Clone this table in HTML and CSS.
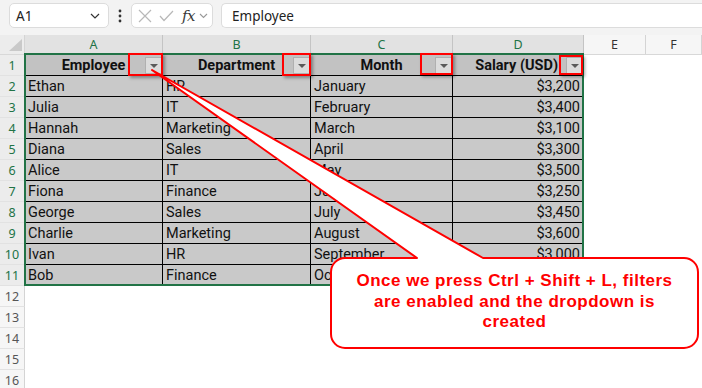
FILE: index.html
```html
<!DOCTYPE html>
<html>
<head>
<meta charset="utf-8">
<link rel="stylesheet" href="styles.css">
</head>
<body>
<div class="app">
  <div class="topbar">
    <div class="namebox">
      <span>A1</span>
      <svg class="chev" width="10" height="6" viewBox="0 0 10 6"><polyline points="1,1 5,5 9,1" fill="none" stroke="#333" stroke-width="1.2"/></svg>
    </div>
    <div class="kebab">
      <svg width="4" height="14" viewBox="0 0 4 14"><circle cx="2" cy="2" r="1.4" fill="#333"/><circle cx="2" cy="7" r="1.4" fill="#333"/><circle cx="2" cy="12" r="1.4" fill="#333"/></svg>
    </div>
    <div class="fxbox">
      <svg width="14" height="14" viewBox="0 0 14 14"><path d="M1 1 L13 13 M13 1 L1 13" stroke="#b8b8b8" stroke-width="1.2" fill="none"/></svg>
      <svg width="15" height="12" viewBox="0 0 15 12"><polyline points="1,6 5,10.5 14,1" fill="none" stroke="#b8b8b8" stroke-width="1.2"/></svg>
      <span class="fx">fx</span>
      <svg width="9" height="6" viewBox="0 0 9 6"><polyline points="1,1 4.5,4.5 8,1" fill="none" stroke="#999" stroke-width="1.1"/></svg>
    </div>
    <div class="formula">Employee</div>
  </div>

  <div class="sheet">
    <div class="row colhead">
      <div class="corner"><svg width="13" height="12" viewBox="0 0 13 12"><polygon points="13,0 13,12 0,12" fill="#c9c9c9"/></svg></div>
      <div class="ch sel">A</div>
      <div class="ch sel">B</div>
      <div class="ch sel">C</div>
      <div class="ch sel">D</div>
      <div class="ch">E</div>
      <div class="ch">F</div>
    </div>

    <div class="row">
      <div class="rh sel">1</div>
      <div class="c hd"><span>Employee</span><span class="fbtn"></span></div>
      <div class="c hd"><span>Department</span><span class="fbtn"></span></div>
      <div class="c hd"><span>Month</span><span class="fbtn"></span></div>
      <div class="c hd right"><span>Salary (USD)</span><span class="fbtn"></span></div>
      <div class="e"></div><div class="e"></div>
    </div>
    <div class="row">
      <div class="rh sel">2</div>
      <div class="c">Ethan</div><div class="c">HR</div><div class="c">January</div><div class="c num">$3,200</div>
      <div class="e"></div><div class="e"></div>
    </div>
    <div class="row">
      <div class="rh sel">3</div>
      <div class="c">Julia</div><div class="c">IT</div><div class="c">February</div><div class="c num">$3,400</div>
      <div class="e"></div><div class="e"></div>
    </div>
    <div class="row">
      <div class="rh sel">4</div>
      <div class="c">Hannah</div><div class="c">Marketing</div><div class="c">March</div><div class="c num">$3,100</div>
      <div class="e"></div><div class="e"></div>
    </div>
    <div class="row">
      <div class="rh sel">5</div>
      <div class="c">Diana</div><div class="c">Sales</div><div class="c">April</div><div class="c num">$3,300</div>
      <div class="e"></div><div class="e"></div>
    </div>
    <div class="row">
      <div class="rh sel">6</div>
      <div class="c">Alice</div><div class="c">IT</div><div class="c">May</div><div class="c num">$3,500</div>
      <div class="e"></div><div class="e"></div>
    </div>
    <div class="row">
      <div class="rh sel">7</div>
      <div class="c">Fiona</div><div class="c">Finance</div><div class="c">June</div><div class="c num">$3,250</div>
      <div class="e"></div><div class="e"></div>
    </div>
    <div class="row">
      <div class="rh sel">8</div>
      <div class="c">George</div><div class="c">Sales</div><div class="c">July</div><div class="c num">$3,450</div>
      <div class="e"></div><div class="e"></div>
    </div>
    <div class="row">
      <div class="rh sel">9</div>
      <div class="c">Charlie</div><div class="c">Marketing</div><div class="c">August</div><div class="c num">$3,600</div>
      <div class="e"></div><div class="e"></div>
    </div>
    <div class="row">
      <div class="rh sel">10</div>
      <div class="c">Ivan</div><div class="c">HR</div><div class="c">September</div><div class="c num">$3,000</div>
      <div class="e"></div><div class="e"></div>
    </div>
    <div class="row">
      <div class="rh sel">11</div>
      <div class="c">Bob</div><div class="c">Finance</div><div class="c">October</div><div class="c num">$3,150</div>
      <div class="e"></div><div class="e"></div>
    </div>
    <div class="row empty"><div class="rh">12</div></div>
    <div class="row empty"><div class="rh">13</div></div>
    <div class="row empty"><div class="rh">14</div></div>
    <div class="row empty"><div class="rh">15</div></div>
    <div class="row empty"><div class="rh">16</div></div>
  </div>

  <div class="selection"></div>

  <div class="mark m1"></div>
  <div class="mark m2"></div>
  <div class="mark m3"></div>
  <div class="mark m4"></div>

  <svg class="callout-shape" width="702" height="388" viewBox="0 0 702 388">
    <path d="M345 258 H417 L152 70 L483 258 H684 A14 14 0 0 1 698 272 V334 A14 14 0 0 1 684 348 H345 A14 14 0 0 1 331 334 V272 A14 14 0 0 1 345 258 Z" fill="#fff" stroke="#ff0000" stroke-width="2" stroke-linejoin="round"/>
  </svg>
  <div class="callout-text">Once we press Ctrl + Shift + L, filters<br>are enabled and the dropdown is<br>created</div>
</div>
</body>
</html>
```

FILE: styles.css
```css
html, body {
  margin: 0;
  padding: 0;
  background: #fff;
}

.app {
  position: relative;
  width: 702px;
  height: 388px;
  overflow: hidden;
  background: #fff;
  font-family: "Noto Sans", "Open Sans", sans-serif;
}

/* ---------- top bar ---------- */
.topbar {
  height: 35px;
  box-sizing: border-box;
  background: #f3f3f3;
  display: flex;
  align-items: flex-start;
  padding-top: 3px;
  padding-left: 9px;
}

.namebox {
  width: 100px;
  height: 25px;
  box-sizing: border-box;
  background: #fff;
  border: 1px solid #dcdcdc;
  border-radius: 5px;
  display: flex;
  align-items: center;
  justify-content: space-between;
  padding: 0 8px 0 6px;
  font-size: 13.5px;
  color: #222;
}

.kebab {
  width: 22px;
  height: 25px;
  display: flex;
  align-items: center;
  justify-content: center;
}

.fxbox {
  width: 82px;
  height: 25px;
  box-sizing: border-box;
  background: #fff;
  border: 1px solid #dcdcdc;
  border-radius: 5px;
  display: flex;
  align-items: center;
  padding: 0 0 0 6px;
  gap: 7px;
}

.fx {
  font-family: "DejaVu Serif", "Liberation Serif", serif;
  font-style: italic;
  font-size: 15px;
  color: #3a3a3a;
  letter-spacing: -0.5px;
  margin-left: 1px;
  margin-right: -3px;
}

.formula {
  margin-left: 8px;
  flex: 1;
  height: 25px;
  box-sizing: border-box;
  background: #fff;
  border: 1px solid #dcdcdc;
  border-right: none;
  border-radius: 5px 0 0 5px;
  padding-left: 10px;
  display: flex;
  align-items: center;
  font-size: 13.5px;
  color: #222;
}

/* ---------- sheet ---------- */
.sheet {
  display: flex;
  flex-direction: column;
}

.row {
  display: grid;
  grid-template-columns: 25px 138px 148px 142px 131px 62px 56px;
  height: 21px;
  font-family: "Roboto", "Liberation Sans", sans-serif;
}

.colhead {
  height: 20px;
  background: #f6f6f6;
  border-bottom: 1px solid #d8d8d8;
  box-sizing: border-box;
}

.corner {
  display: flex;
  align-items: flex-end;
  justify-content: flex-end;
  padding: 0 2px 3px 0;
  background: #ececec;
  border-right: 1px solid #d4d4d4;
}

.ch {
  display: flex;
  align-items: center;
  justify-content: center;
  font-size: 12.5px;
  color: #333;
  border-right: 1px solid #d4d4d4;
  font-family: "Noto Sans", sans-serif;
}

.ch.sel {
  background: #e2e2e2;
  color: #217346;
  border-right-color: #c4c4c4;
}

.rh {
  display: flex;
  align-items: center;
  justify-content: center;
  font-size: 12.5px;
  color: #555;
  background: #f6f6f6;
  border-right: 1px solid #d4d4d4;
  border-bottom: 1px solid #e2e2e2;
  box-sizing: border-box;
  font-family: "Noto Sans", sans-serif;
}

.rh.sel {
  background: #ececec;
  color: #217346;
}

.c {
  position: relative;
  background: #c9c9c9;
  border-right: 1px solid #000;
  border-bottom: 1px solid #000;
  box-sizing: border-box;
  display: flex;
  align-items: center;
  padding: 1px 3px 0 3px;
  font-size: 14.5px;
  color: #111;
  white-space: nowrap;
  overflow: hidden;
}

.c.num {
  justify-content: flex-end;
  padding-right: 3px;
}

.c.hd {
  background: #c2c2c2;
  font-weight: 700;
  justify-content: center;
  color: #111;
}

.c.hd.right {
  justify-content: flex-end;
  padding-right: 25px;
}

.fbtn {
  position: absolute;
  right: 0;
  top: 2px;
  width: 17px;
  height: 17px;
  box-sizing: border-box;
  background: #dcdcdc;
  border: 1px solid #b0b0b0;
  display: flex;
  align-items: center;
  justify-content: center;
}

.fbtn::after {
  content: "";
  display: block;
  width: 0;
  height: 0;
  border-left: 4px solid transparent;
  border-right: 4px solid transparent;
  border-top: 4px solid #5a5a5a;
}

.e {
  background: #fff;
}

/* ---------- overlays ---------- */
.selection {
  position: absolute;
  left: 24px;
  top: 53px;
  width: 560px;
  height: 233px;
  box-sizing: border-box;
  border: 2px solid #217346;
  pointer-events: none;
}

.mark {
  position: absolute;
  box-sizing: border-box;
  border: 2px solid #ff0000;
  box-shadow: 2px 2px 3px rgba(0, 0, 0, 0.35);
}

.m1 { left: 128px; top: 53px; width: 35px; height: 23px; }
.m2 { left: 282px; top: 53px; width: 29px; height: 23px; }
.m3 { left: 420px; top: 53px; width: 33px; height: 22px; }
.m4 { left: 559px; top: 55px; width: 24px; height: 20px; }

.callout-shape {
  position: absolute;
  left: 0;
  top: 0;
}

.callout-text {
  position: absolute;
  left: 331px;
  top: 258px;
  width: 367px;
  height: 90px;
  display: flex;
  align-items: center;
  justify-content: center;
  text-align: center;
  padding-bottom: 2px;
  box-sizing: border-box;
  font-family: "Liberation Sans", Arial, sans-serif;
  font-weight: 700;
  font-size: 17px;
  line-height: 20.5px;
  color: #ff0000;
  letter-spacing: 0.5px;
}
```
